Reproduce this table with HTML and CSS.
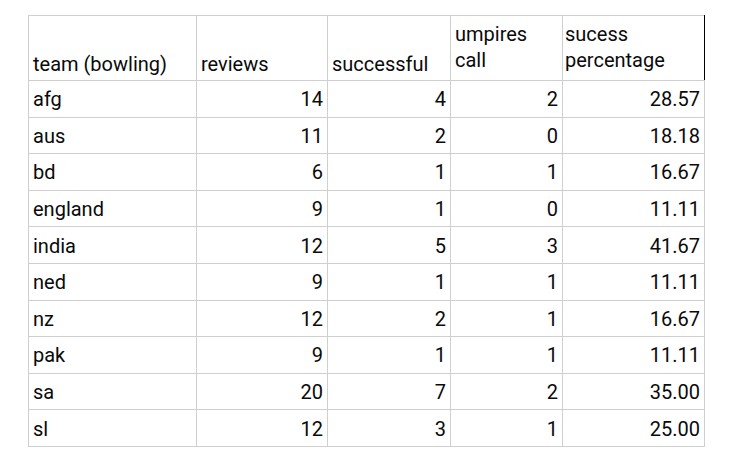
FILE: index.html
```html
<!DOCTYPE html>
<html>
<head>
<meta charset="utf-8">
<link rel="stylesheet" href="styles.css">
</head>
<body>
<table class="sheet">
  <colgroup>
    <col class="c1"><col class="c2"><col class="c3"><col class="c4"><col class="c5">
  </colgroup>
  <thead>
    <tr>
      <th>team (bowling)</th>
      <th>reviews</th>
      <th>successful</th>
      <th class="wrap">umpires<br>call</th>
      <th class="wrap last">sucess<br>percentage</th>
    </tr>
  </thead>
  <tbody>
    <tr><td>afg</td><td class="num">14</td><td class="num">4</td><td class="num">2</td><td class="num">28.57</td></tr>
    <tr><td>aus</td><td class="num">11</td><td class="num">2</td><td class="num">0</td><td class="num">18.18</td></tr>
    <tr><td>bd</td><td class="num">6</td><td class="num">1</td><td class="num">1</td><td class="num">16.67</td></tr>
    <tr><td>england</td><td class="num">9</td><td class="num">1</td><td class="num">0</td><td class="num">11.11</td></tr>
    <tr><td>india</td><td class="num">12</td><td class="num">5</td><td class="num">3</td><td class="num">41.67</td></tr>
    <tr><td>ned</td><td class="num">9</td><td class="num">1</td><td class="num">1</td><td class="num">11.11</td></tr>
    <tr><td>nz</td><td class="num">12</td><td class="num">2</td><td class="num">1</td><td class="num">16.67</td></tr>
    <tr><td>pak</td><td class="num">9</td><td class="num">1</td><td class="num">1</td><td class="num">11.11</td></tr>
    <tr><td>sa</td><td class="num">20</td><td class="num">7</td><td class="num">2</td><td class="num">35.00</td></tr>
    <tr><td>sl</td><td class="num">12</td><td class="num">3</td><td class="num">1</td><td class="num">25.00</td></tr>
  </tbody>
</table>
</body>
</html>
```
FILE: styles.css
```css
html, body {
  margin: 0;
  padding: 0;
  background: #fff;
}
body {
  padding: 15px 0 0 28px;
  font-family: Roboto, "Liberation Sans", Arial, sans-serif;
  font-size: 20px;
  color: #0a0a0a;
}
.sheet {
  border-collapse: collapse;
  table-layout: fixed;
  width: 676px;
}
.c1 { width: 168px; }
.c2 { width: 131px; }
.c3 { width: 123px; }
.c4 { width: 112px; }
.c5 { width: 142px; }
.sheet th,
.sheet td {
  border: 1px solid #cfcfcf;
  padding: 0 4px;
  white-space: nowrap;
  overflow: hidden;
}
.sheet th {
  font-weight: 400;
  text-align: left;
  vertical-align: bottom;
  height: 57px;
  line-height: 24px;
  padding-bottom: 4px;
}
.sheet th.wrap {
  line-height: 26px;
  padding-bottom: 7px;
}
.sheet th.last {
  border-right: 1px solid #000;
  padding-left: 2px;
}
.sheet td {
  height: 34.6px;
  line-height: 22px;
  vertical-align: middle;
  padding-top: 1px;
}
.sheet td.num {
  text-align: right;
}
```
